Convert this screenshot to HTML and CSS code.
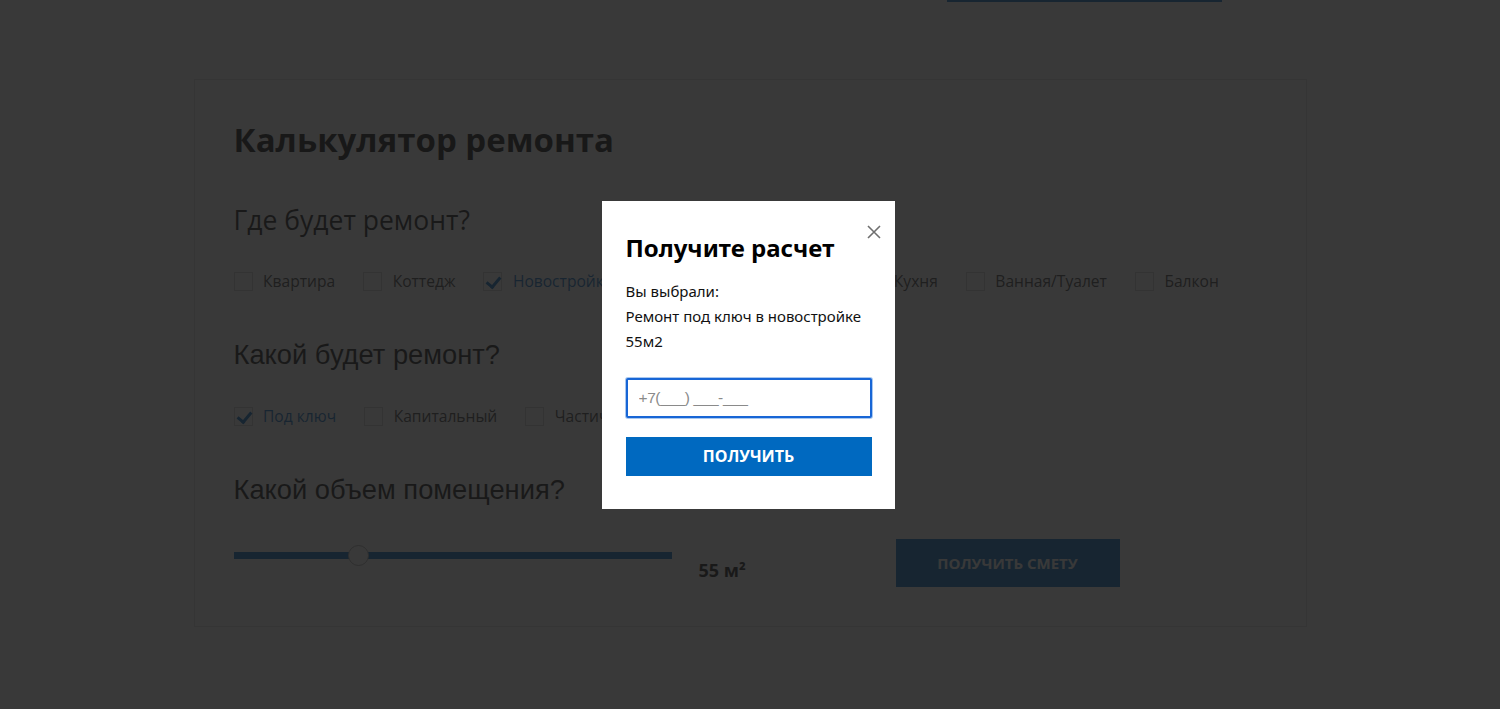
FILE: index.html
```html
<!DOCTYPE html>
<html lang="ru">
<head>
    <meta charset="UTF-8">
    <meta name="viewport" content="width=device-width, initial-scale=1.0">
    <title>Калькулятор ремонта</title>
    <link rel="stylesheet" href="styles.css">
</head>
<body>
    <div class="top-strip">
        <div class="top-line"></div>
    </div>

    <div class="calc">
        <h1>Калькулятор ремонта</h1>

        <h2 class="q-open">Где будет ремонт?</h2>
        <div class="options">
            <label class="opt"><span class="box"></span>Квартира</label>
            <label class="opt"><span class="box"></span>Коттедж</label>
            <label class="opt checked"><span class="box"></span>Новостройка</label>
            <label class="opt"><span class="box"></span>Офис</label>
            <label class="opt"><span class="box"></span>Комнаты</label>
            <label class="opt"><span class="box"></span>Кухня</label>
            <label class="opt"><span class="box"></span>Ванная/Туалет</label>
            <label class="opt"><span class="box"></span>Балкон</label>
        </div>

        <h2>Какой будет ремонт?</h2>
        <div class="options">
            <label class="opt checked"><span class="box"></span>Под ключ</label>
            <label class="opt"><span class="box"></span>Капитальный</label>
            <label class="opt"><span class="box"></span>Частичный</label>
            <label class="opt"><span class="box"></span>Косметический</label>
        </div>

        <h2>Какой объем помещения?</h2>
        <div class="volume-row">
            <div class="range">
                <span class="thumb" style="left: 124px"></span>
            </div>
            <div class="volume-value">55 м²</div>
            <button class="estimate-btn">Получить смету</button>
        </div>
    </div>

    <div class="overlay">
        <div class="modal">
            <button class="close" aria-label="Закрыть">
                <svg width="14" height="14" viewBox="0 0 14 14">
                    <path d="M1 1 L13 13 M13 1 L1 13" stroke="#6f6f6f" stroke-width="1.6" fill="none"/>
                </svg>
            </button>
            <h3>Получите расчет</h3>
            <p>Вы выбрали:<br>Ремонт под ключ в новостройке<br>55м2</p>
            <input class="phone" type="text" placeholder="+7(___) ___-___">
            <button class="get-btn">Получить</button>
        </div>
    </div>
</body>
</html>
```

FILE: styles.css
```css
* {
    margin: 0;
    padding: 0;
    box-sizing: border-box;
}

body {
    background: #fff;
    font-family: "Open Sans", Arial, sans-serif;
    color: #111;
    height: 709px;
    overflow: hidden;
}

.top-strip {
    height: 79px;
    display: flex;
    justify-content: flex-end;
    padding-right: 278px;
}

.top-line {
    width: 275px;
    height: 2px;
    background: #0069c0;
}

.calc {
    width: 1113px;
    margin: 0 auto;
    border: 1px solid #e2e2e2;
    padding: 40px 39px 39px;
}

.calc h1 {
    font-size: 33px;
    line-height: 40px;
    font-weight: 700;
    color: #0a0a0a;
    margin-bottom: 44px;
}

.calc h2 {
    font-family: "Liberation Sans", Arial, sans-serif;
    font-size: 27.3px;
    line-height: 32px;
    font-weight: 400;
    color: #111;
    margin-bottom: 33px;
}

.calc h2.q-open {
    font-family: "Open Sans", Arial, sans-serif;
    font-size: 26.5px;
}

.options {
    display: flex;
    height: 24px;
    margin-bottom: 46px;
}

.opt {
    display: flex;
    align-items: center;
    font-size: 15.6px;
    color: #3c3c3c;
    margin-right: 28px;
    white-space: nowrap;
}

.opt .box {
    width: 19px;
    height: 19px;
    border: 1px solid #cfcfcf;
    margin-right: 10.5px;
    position: relative;
}

.opt.checked {
    color: #0a6cc2;
}

.opt.checked .box::after {
    content: "";
    position: absolute;
    left: 5px;
    top: 1px;
    width: 6px;
    height: 11px;
    border-right: 3px solid #0069c0;
    border-bottom: 3px solid #0069c0;
    transform: rotate(40deg);
}

.volume-row {
    display: flex;
    align-items: flex-start;
    height: 48px;
}

.range {
    width: 438px;
    height: 7px;
    margin-top: 13px;
    background: #0069c0;
    position: relative;
}

.thumb {
    position: absolute;
    top: -7px;
    width: 21px;
    height: 21px;
    margin-left: -10px;
    border-radius: 50%;
    background: #fff;
    border: 1px solid #a9a9a9;
}

.volume-value {
    flex: 0 0 197px;
    margin-left: 27px;
    margin-top: 19px;
    font-size: 18px;
    line-height: 24px;
    font-weight: 700;
    color: #111;
}

.estimate-btn {
    width: 224px;
    height: 48px;
    border: none;
    background: #0069c0;
    color: #fff;
    font-family: "Open Sans", Arial, sans-serif;
    font-size: 15px;
    font-weight: 700;
    text-transform: uppercase;
}

.overlay {
    position: fixed;
    inset: 0;
    background: rgba(27, 27, 27, 0.865);
    display: flex;
    align-items: center;
    justify-content: center;
}

.modal {
    position: relative;
    width: 293px;
    height: 308px;
    margin-left: -4px;
    background: #fff;
    padding: 28px 23px 32px 24px;
    font-family: "Noto Sans", "Open Sans", sans-serif;
    color: #111;
}

.close {
    position: absolute;
    top: 24px;
    right: 14px;
    border: none;
    background: none;
    width: 14px;
    height: 14px;
    display: block;
}

.close svg {
    display: block;
}

.modal h3 {
    font-size: 24px;
    line-height: 38px;
    font-weight: 700;
    color: #000;
    margin-bottom: 12px;
}

.modal p {
    font-size: 15px;
    line-height: 25px;
    color: #111;
    margin-bottom: 24px;
}

.phone {
    display: block;
    width: 246px;
    height: 40px;
    border: 2px solid #1866d6;
    border-radius: 2px;
    box-shadow: 0 0 0 1px #a9c8f0;
    padding: 0 11px;
    font-family: "Liberation Sans", Arial, sans-serif;
    font-size: 15.5px;
    letter-spacing: -0.4px;
    outline: none;
}

.phone::placeholder {
    color: #8a8a8a;
}

.get-btn {
    display: block;
    width: 246px;
    height: 39px;
    margin-top: 19px;
    border: none;
    background: #0069c0;
    color: #fff;
    font-family: "Open Sans", Arial, sans-serif;
    font-size: 16px;
    font-weight: 700;
    text-transform: uppercase;
}
```
